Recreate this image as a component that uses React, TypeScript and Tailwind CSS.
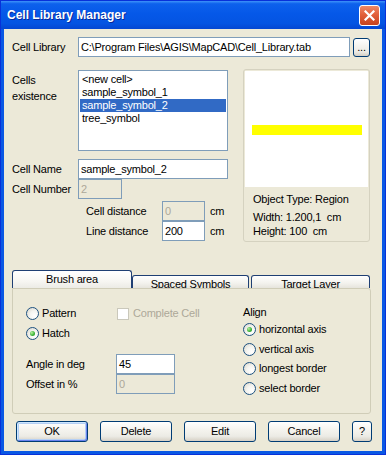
import React from 'react';

const radioBase =
  'w-[13px] h-[13px] rounded-full border border-[#1C5180] bg-[radial-gradient(circle_at_70%_70%,#ffffff_0%,#f4f4f0_45%,#d6d3c8_100%)] flex items-center justify-center shrink-0';

function Radio({ checked = false }: { checked?: boolean }) {
  return (
    <span className={radioBase}>
      {checked && (
        <span className="w-[5px] h-[5px] rounded-full bg-[radial-gradient(circle_at_35%_35%,#b8f2a0_0%,#3fb53a_55%,#1c8c1c_100%)]" />
      )}
    </span>
  );
}

function XpButton({ label, isDefault = false, w = 'w-[72px]' }: { label: string; isDefault?: boolean; w?: string }) {
  return (
    <button
      className={`${w} h-[21px] rounded-[3px] border border-[#003C74] bg-[linear-gradient(180deg,#ffffff_0%,#f5f4ef_40%,#ecebe5_75%,#d6d0c5_100%)] text-black flex items-center justify-center ${
        isDefault ? 'shadow-[inset_1px_1px_0_#CEE7FF,inset_-1px_-1px_0_#6982EE,inset_0_0_0_2px_#B4CFF5]' : ''
      }`}
    >
      {label}
    </button>
  );
}

export default function App() {
  const cells = ['<new cell>', 'sample_symbol_1', 'sample_symbol_2', 'tree_symbol'];
  const selected = 'sample_symbol_2';

  return (
    <div className="w-[386px] h-[455px] flex flex-col bg-[#0A58E4] border border-[#0831D9] text-[11px] leading-[13px] tracking-[-0.2px] text-black [font-family:'Liberation_Sans',Arial,sans-serif]">
      {/* title bar */}
      <div className="h-[28px] flex items-center justify-between pl-[6px] pr-[5px] bg-[linear-gradient(180deg,#3E93FA_0%,#0D61EC_10%,#0558E8_45%,#0454E2_80%,#0447D2_100%)]">
        <span className="text-white font-bold text-[12px] tracking-normal [text-shadow:1px_1px_#0A2A9A]">
          Cell Library Manager
        </span>
        <span className="w-[21px] h-[21px] rounded-[3px] border border-white bg-[linear-gradient(180deg,#EE8866_0%,#E2603A_45%,#C6421E_100%)] flex items-center justify-center">
          <svg width="11" height="11" viewBox="0 0 11 11">
            <path d="M1.5 1.5 L9.5 9.5 M9.5 1.5 L1.5 9.5" stroke="white" strokeWidth="2.2" strokeLinecap="square" />
          </svg>
        </span>
      </div>

      {/* body */}
      <div className="flex-1 mx-[3px] mb-[3px] bg-[#ECE9D8] flex flex-col pl-[8px] pt-[8px]">
        {/* cell library row */}
        <div className="flex items-center h-[20px]">
          <span className="w-[66px]">Cell Library</span>
          <div className="w-[272px] h-[20px] border border-[#7F9DB9] bg-white flex items-center px-[2px] whitespace-nowrap overflow-hidden">
            C:\Program Files\AGIS\MapCAD\Cell_Library.tab
          </div>
          <XpButton label="..." w="w-[17px] ml-[3px] !h-[19px]" />
        </div>

        {/* middle area */}
        <div className="flex mt-[12px]">
          <div className="w-[216px] flex flex-col">
            <div className="flex">
              <span className="w-[66px] pt-[3px] leading-[16px]">
                Cells
                <br />
                existence
              </span>
              <div className="w-[150px] h-[81px] mt-[1px] border border-[#7F9DB9] bg-white px-[1px] pt-[2px]">
                {cells.map((c) => (
                  <div
                    key={c}
                    className={`h-[13px] pl-[2px] flex items-center whitespace-nowrap ${
                      c === selected ? 'bg-[#316AC5] text-white' : ''
                    }`}
                  >
                    {c}
                  </div>
                ))}
              </div>
            </div>

            <div className="flex items-center mt-[8px] h-[20px]">
              <span className="w-[66px]">Cell Name</span>
              <div className="w-[150px] h-[20px] border border-[#7F9DB9] bg-white flex items-center px-[2px]">
                sample_symbol_2
              </div>
            </div>
            <div className="flex items-center h-[20px]">
              <span className="w-[66px]">Cell Number</span>
              <div className="w-[44px] h-[20px] border border-[#7F9DB9] flex items-center px-[2px] text-[#ACA899]">
                2
              </div>
            </div>

            <div className="flex items-center mt-[2px] h-[20px] pl-[74px]">
              <span className="w-[76px]">Cell distance</span>
              <div className="w-[43px] h-[20px] border border-[#7F9DB9] flex items-center px-[2px] text-[#ACA899]">
                0
              </div>
              <span className="ml-[5px]">cm</span>
            </div>
            <div className="flex items-center h-[20px] pl-[74px]">
              <span className="w-[76px]">Line distance</span>
              <div className="w-[43px] h-[20px] border border-[#7F9DB9] bg-white flex items-center px-[2px]">
                200
              </div>
              <span className="ml-[5px]">cm</span>
            </div>
          </div>

          {/* preview */}
          <div className="ml-[15px] w-[127px] h-[173px] rounded-[3px] border border-[#D5D2C0] p-[1px] flex flex-col">
            <div className="h-[116px] bg-white pt-[54px] pl-[7px]">
              <div className="w-[110px] h-[10px] bg-[#FFFF00]" />
            </div>
            <div className="pl-[8px] mt-[5px] leading-[14px] whitespace-pre">
              <div>Object Type: Region</div>
              <div className="mt-[4px]">Width: 1.200,1  cm</div>
              <div>Height: 100  cm</div>
            </div>
          </div>
        </div>

        {/* tabs */}
        <div className="flex items-end mt-[28px] h-[18px]">
          <div className="w-[120px] h-[18px] rounded-t-[3px] border border-b-0 border-[#1F3F73] bg-[linear-gradient(180deg,#ffffff_0%,#f7f6f2_60%,#ecebe5_100%)] flex items-center justify-center">
            Brush area
          </div>
          <div className="w-[117px] h-[13px] rounded-t-[3px] border border-b-0 border-[#1F3F73] bg-[linear-gradient(180deg,#ffffff_0%,#f3f2ed_60%,#e6e4dc_100%)] flex items-start justify-center overflow-hidden pt-[2px]">
            Spaced Symbols
          </div>
          <div className="w-[119px] h-[13px] ml-[2px] rounded-t-[3px] border border-b-0 border-[#1F3F73] bg-[linear-gradient(180deg,#ffffff_0%,#f3f2ed_60%,#e6e4dc_100%)] flex items-start justify-center overflow-hidden pt-[2px]">
            Target Layer
          </div>
        </div>

        {/* tab panel */}
        <div className="w-[359px] h-[126px] rounded-b-[3px] rounded-tr-[3px] border border-[#D0CDB8] flex">
          <div className="w-[230px] pl-[13px] pt-[18px] flex flex-col">
            <div className="flex items-center h-[13px]">
              <div className="w-[91px] flex items-center">
                <Radio />
                <span className="ml-[3px]">Pattern</span>
              </div>
              <span className="w-[12px] h-[12px] border border-[#CAC8BB] bg-white" />
              <span className="ml-[4px] text-[#ACA899]">Complete Cell</span>
            </div>
            <div className="flex items-center h-[13px] mt-[7px]">
              <Radio checked />
              <span className="ml-[3px]">Hatch</span>
            </div>
            <div className="flex items-center h-[20px] mt-[14px]">
              <span className="w-[90px]">Angle in deg</span>
              <div className="w-[59px] h-[20px] border border-[#7F9DB9] bg-white flex items-center px-[2px]">
                45
              </div>
            </div>
            <div className="flex items-center h-[20px]">
              <span className="w-[90px]">Offset in %</span>
              <div className="w-[59px] h-[20px] border border-[#7F9DB9] flex items-center px-[2px] text-[#ACA899]">
                0
              </div>
            </div>
          </div>

          <div className="pt-[16px] flex flex-col">
            <div className="h-[15px] flex items-center">Align</div>
            {['horizontal axis', 'vertical axis', 'longest border', 'select border'].map((o, i) => (
              <div key={o} className="flex items-center h-[19.5px]">
                <Radio checked={i === 0} />
                <span className="ml-[3px]">{o}</span>
              </div>
            ))}
          </div>
        </div>

        {/* buttons */}
        <div className="flex mt-[7px] ml-[4px] gap-[12px]">
          <XpButton label="OK" isDefault />
          <XpButton label="Delete" />
          <XpButton label="Edit" />
          <XpButton label="Cancel" />
          <XpButton label="?" w="w-[20px]" />
        </div>
      </div>
    </div>
  );
}
